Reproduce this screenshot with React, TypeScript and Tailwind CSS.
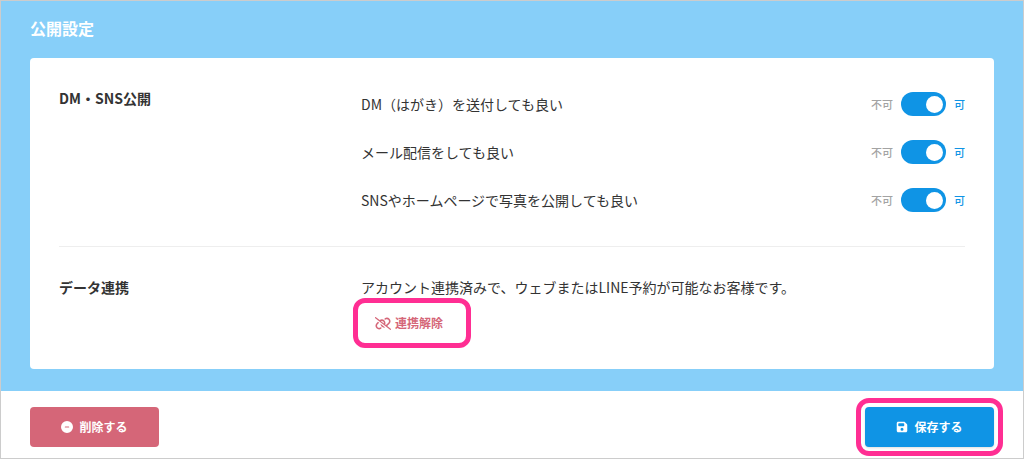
import React, { useState } from "react";
import { FaCircleMinus, FaFloppyDisk, FaLinkSlash } from "react-icons/fa6";

interface PublishOption {
  id: string;
  label: string;
}

interface ToggleRowProps {
  option: PublishOption;
  checked: boolean;
  onToggle: (id: string) => void;
}

const publishOptions: PublishOption[] = [
  { id: "dm", label: "DM（はがき）を送付しても良い" },
  { id: "mail", label: "メール配信をしても良い" },
  { id: "sns", label: "SNSやホームページで写真を公開しても良い" },
];

const ToggleRow: React.FC<ToggleRowProps> = ({ option, checked, onToggle }) => (
  <div className="flex h-6 items-center justify-between">
    <label htmlFor={option.id} className="text-sm">
      {option.label}
    </label>
    <div className="flex items-center gap-2 text-[11px] leading-4 font-medium">
      <span className={checked ? "text-[#a3a3a3]" : "text-[#0f94e5]"}>不可</span>
      <input
        id={option.id}
        type="checkbox"
        role="switch"
        checked={checked}
        onChange={() => onToggle(option.id)}
        className="flex h-6 w-[45px] cursor-pointer appearance-none items-center justify-start rounded-full bg-gray-300 px-[3px] before:block before:size-[17px] before:rounded-full before:bg-white before:content-[''] checked:justify-end checked:bg-[#0f94e5]"
      />
      <span className={checked ? "text-[#0f94e5]" : "text-[#a3a3a3]"}>可</span>
    </div>
  </div>
);

const App: React.FC = () => {
  const [enabled, setEnabled] = useState<Record<string, boolean>>({
    dm: true,
    mail: true,
    sns: true,
  });

  const handleToggle = (id: string) => {
    setEnabled((prev) => ({ ...prev, [id]: !prev[id] }));
  };

  return (
    <div className="border border-[#cccccc] bg-white font-['Noto_Sans_CJK_JP',sans-serif] text-[#333333]">
      <main className="bg-[#87cff9] px-[29px] pt-[15px] pb-[22px]">
        <h2 className="mb-[18px] text-base font-bold text-white">公開設定</h2>

        <div className="rounded bg-white px-[29px] pt-7 pb-[29px]">
          <section className="grid grid-cols-3 border-b border-[#eeeeee] pb-[34px]">
            <h3 className="text-sm leading-6 font-bold">DM・SNS公開</h3>
            <div className="col-span-2 flex flex-col gap-6 pt-1.5">
              {publishOptions.map((option) => (
                <ToggleRow
                  key={option.id}
                  option={option}
                  checked={enabled[option.id]}
                  onToggle={handleToggle}
                />
              ))}
            </div>
          </section>

          <section className="grid grid-cols-3 pt-7">
            <h3 className="text-sm leading-6 font-bold">データ連携</h3>
            <div className="col-span-2">
              <p className="text-sm leading-6">
                アカウント連携済みで、ウェブまたはLINE予約が可能なお客様です。
              </p>
              <button
                type="button"
                className="mt-[7px] flex h-[34px] w-[102px] cursor-pointer items-center gap-1 rounded pl-3.5 text-xs font-bold text-[#d56678] outline-[5px] outline-offset-[3px] outline-[#ff2e93]"
              >
                <FaLinkSlash className="h-[13px] w-4" />
                連携解除
              </button>
            </div>
          </section>
        </div>
      </main>

      <footer className="flex items-center justify-between px-[29px] pt-4 pb-[11px]">
        <button
          type="button"
          className="flex h-10 w-[129px] cursor-pointer items-center justify-center gap-1.5 rounded bg-[#d56678] text-xs font-bold text-white"
        >
          <FaCircleMinus className="size-3" />
          削除する
        </button>
        <button
          type="button"
          className="flex h-10 w-[129px] cursor-pointer items-center justify-center gap-1.5 rounded bg-[#0f94e5] text-xs font-bold text-white shadow-sm outline-[5px] outline-offset-4 outline-[#ff2e93]"
        >
          <FaFloppyDisk className="size-3" />
          保存する
        </button>
      </footer>
    </div>
  );
};

export default App;
